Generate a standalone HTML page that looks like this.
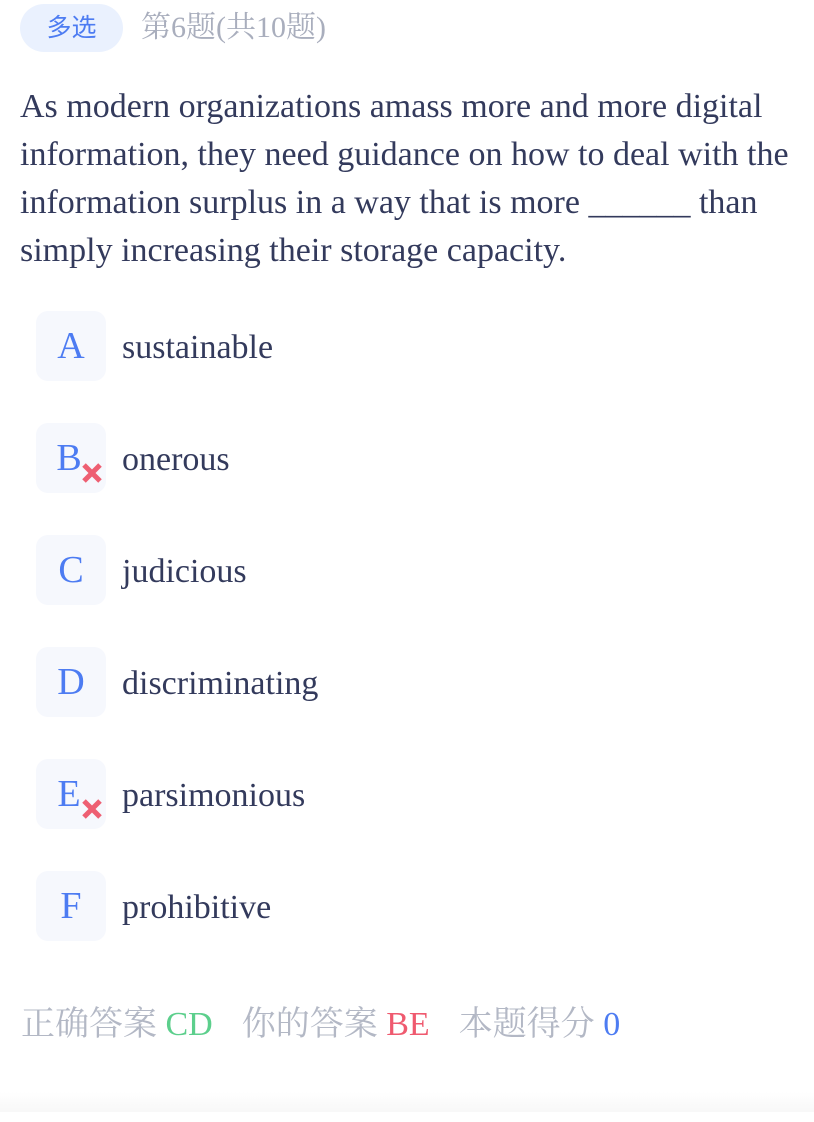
<!DOCTYPE html>
<html><head><meta charset="utf-8"><style>
body{margin:0;width:814px;height:1122px;background:#fff;position:relative;overflow:hidden;font-family:"Liberation Serif","Noto Serif CJK SC",serif;}
.badge{position:absolute;left:20px;top:4px;width:103px;height:48px;border-radius:24px;background:#eaf1fe;color:#4d7cf2;font-family:"Liberation Sans","Noto Sans CJK SC",sans-serif;font-size:25px;line-height:48px;text-align:center;}
.title{position:absolute;left:141px;top:4px;line-height:48px;font-size:30px;color:#a9aebd;}
.q{position:absolute;left:20px;top:83px;width:794px;font-size:34px;line-height:48px;color:#333a5c;}
.opt{position:absolute;left:36px;width:70px;height:70px;border-radius:12px;background:#f6f8fd;}
.opt span{position:absolute;left:0;width:70px;text-align:center;top:0;line-height:70px;font-size:38px;color:#4d7cf2;}
.opt svg{position:absolute;left:44px;top:38px;}
.ot{position:absolute;left:122px;font-size:34px;color:#333a5c;line-height:70px;}
.foot{position:absolute;left:21px;top:1001px;font-size:34px;line-height:48px;color:#b3b8c5;white-space:pre;}
.g{color:#5ccf8c}.r{color:#ef5a6f}.b{color:#4d7cf2}
.sp{display:inline-block;width:29px}
.shade{position:absolute;left:0;top:1092px;width:814px;height:20px;background:linear-gradient(#fff,#f8f8f8);}
</style></head><body>
<div class="badge">多选</div>
<div class="title">第6题(共10题)</div>
<div class="q">As modern organizations amass more and more digital information, they need guidance on how to deal with the information surplus in a way that is more ______ than simply increasing their storage capacity.</div>

<div class="opt" style="top:311px"><span>A</span></div><div class="ot" style="top:313px">sustainable</div>
<div class="opt" style="top:423px"><span style="left:-2px">B</span><svg width="24" height="24" viewBox="0 0 24 24"><path d="M4 4L20 20M20 4L4 20" stroke="#ee5f72" stroke-width="5"/></svg></div><div class="ot" style="top:425px">onerous</div>
<div class="opt" style="top:535px"><span>C</span></div><div class="ot" style="top:537px">judicious</div>
<div class="opt" style="top:647px"><span>D</span></div><div class="ot" style="top:649px">discriminating</div>
<div class="opt" style="top:759px"><span style="left:-2px">E</span><svg width="24" height="24" viewBox="0 0 24 24"><path d="M4 4L20 20M20 4L4 20" stroke="#ee5f72" stroke-width="5"/></svg></div><div class="ot" style="top:761px">parsimonious</div>
<div class="opt" style="top:871px"><span>F</span></div><div class="ot" style="top:873px">prohibitive</div>

<div class="foot">正确答案 <span class="g">CD</span><span class="sp"></span>你的答案 <span class="r">BE</span><span class="sp"></span>本题得分 <span class="b">0</span></div>
<div class="shade"></div>
</body></html>
